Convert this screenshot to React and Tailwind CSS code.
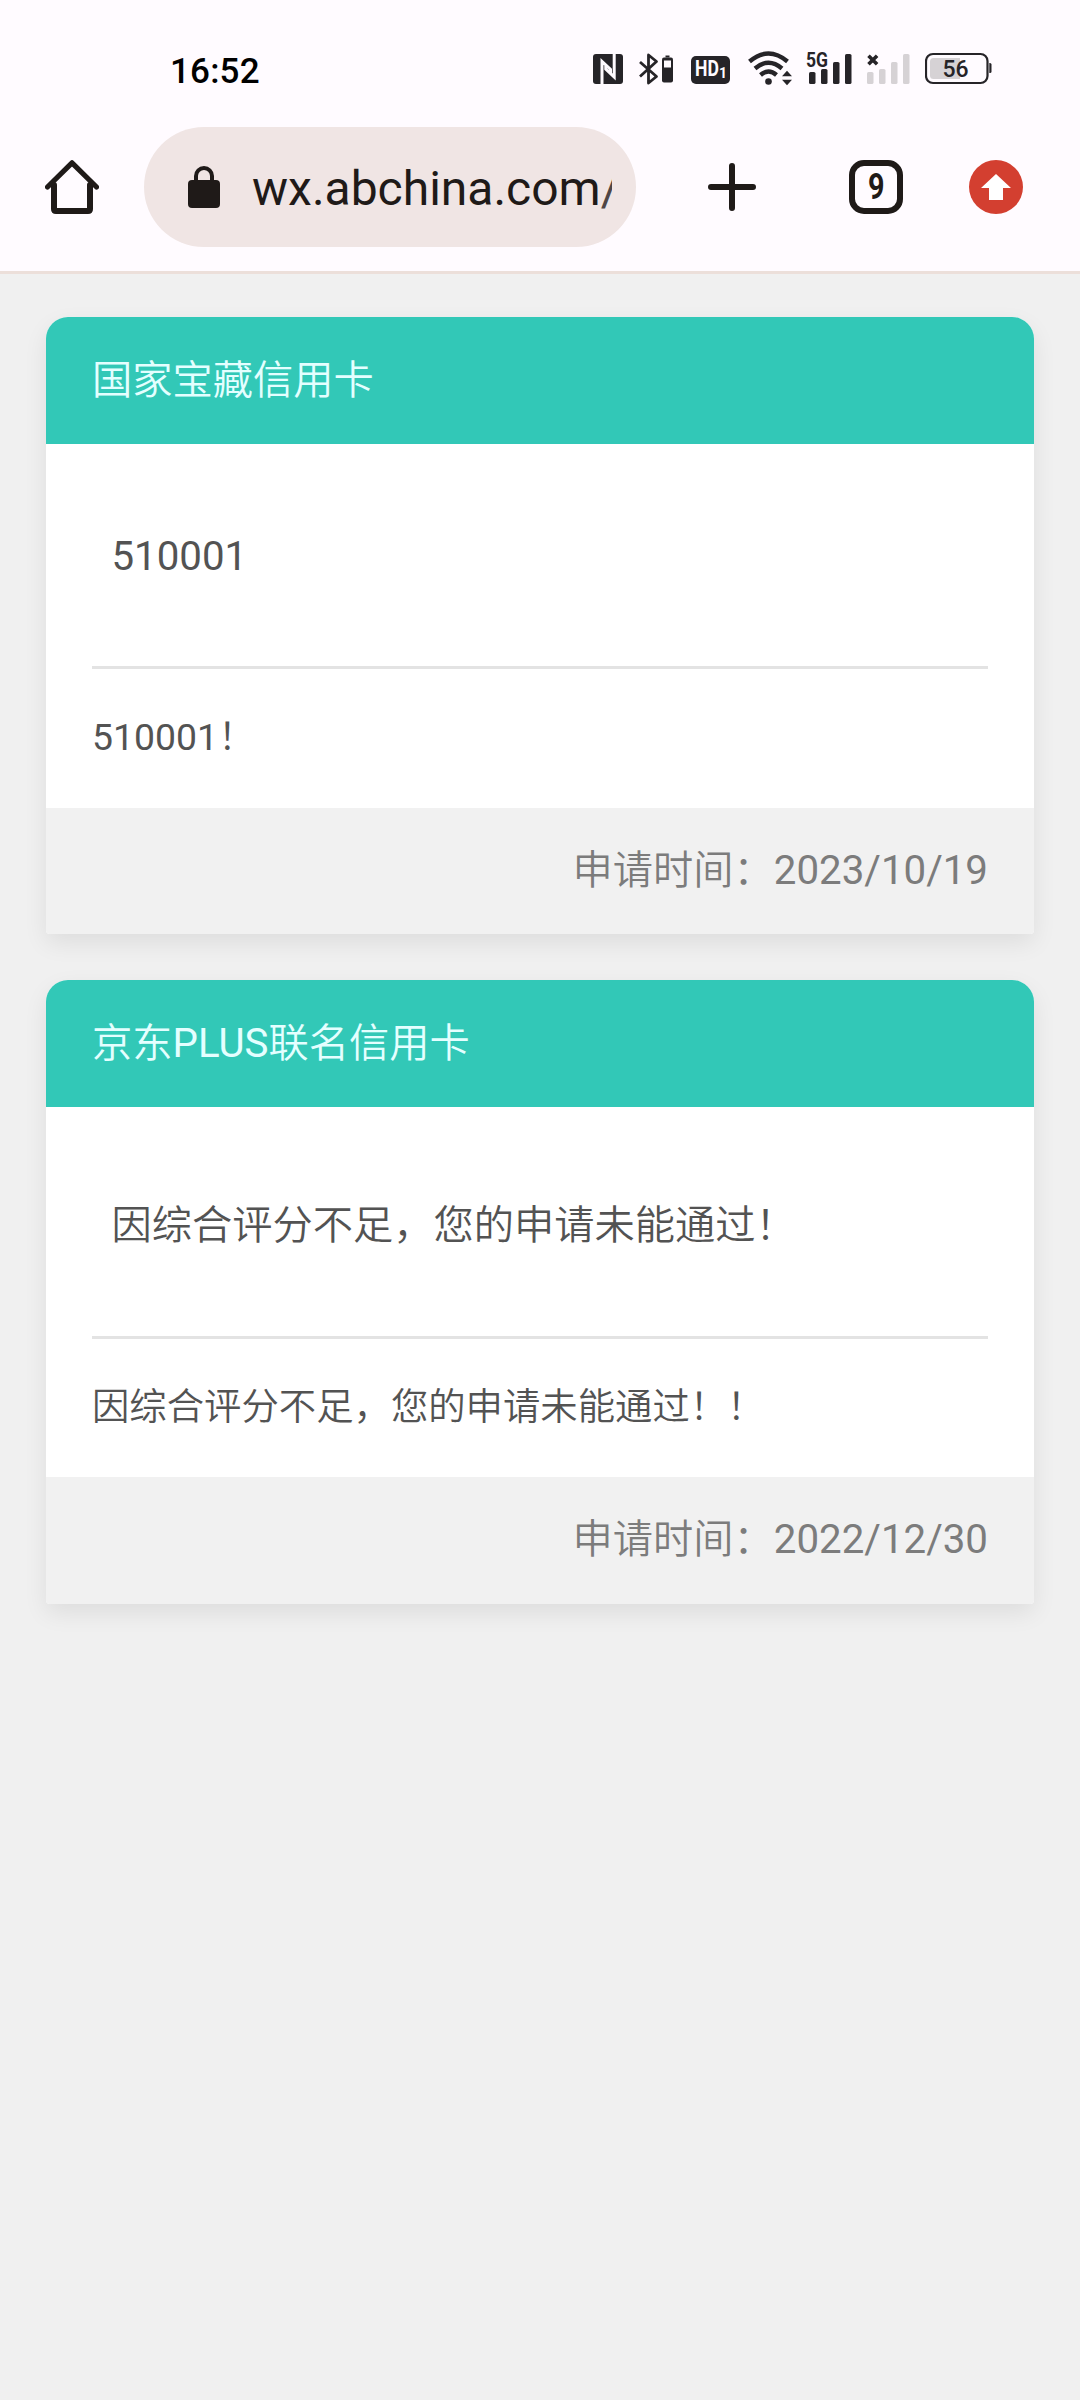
const cards = [
  {
    title: "国家宝藏信用卡",
    result: "510001",
    detail: "510001！",
    date: "2023/10/19",
    resultClass: "h-[222px] pt-1",
    detailClass: "h-[142px] pb-1",
    footerClass: "h-[126px]",
  },
  {
    title: "京东PLUS联名信用卡",
    result: "因综合评分不足，您的申请未能通过！",
    detail: "因综合评分不足，您的申请未能通过！！",
    date: "2022/12/30",
    resultClass: "h-[229px] pt-2",
    detailClass: "h-[141px] pb-0.5",
    footerClass: "h-[127px] pb-0.5",
  },
];

function SignalBars({ x, color }) {
  return (
    <g fill={color}>
      <rect x={x} y="72" width="6.5" height="12" rx="1.6" />
      <rect x={x + 12} y="69" width="6.5" height="15" rx="1.6" />
      <rect x={x + 24} y="62" width="6.5" height="22" rx="1.6" />
      <rect x={x + 36} y="54" width="6.5" height="30" rx="1.6" />
    </g>
  );
}

function StatusIcons() {
  return (
    <div className="flex h-10 items-center text-[#262428]">
      {/* NFC */}
      <svg className="h-10 w-[30px]" viewBox="593 48 30 40" fill="none">
        <rect x="593" y="54" width="30" height="30" rx="3" fill="currentColor" />
        <path d="M602 84V61.5L610.500 69.500V73" stroke="#fffbff" strokeWidth="3" />
        <path d="M614.200 54V77L605.800 69V66" stroke="#fffbff" strokeWidth="3" />
      </svg>
      {/* Bluetooth with device battery */}
      <svg className="ml-4 h-10 w-[34px]" viewBox="639 48 34 40" fill="none">
        <path d="M640 62l16.500 14.500L648.500 83V55l8 6.500L640 76.500" stroke="currentColor" strokeWidth="2.800" strokeLinejoin="round" />
        <path d="M665.500 55.500h4v2h-4z" fill="currentColor" />
        <rect x="662" y="57.500" width="11" height="25" rx="2" fill="currentColor" />
        <rect x="664" y="60.500" width="7" height="7" fill="#fffbff" />
      </svg>
      {/* HD voice */}
      <div className="mt-1 ml-[18px] flex h-7 w-[39px] items-center rounded-[5px] bg-current pl-1 font-['Roboto',sans-serif] leading-7 font-bold">
        <span className="w-6">
          <span className="inline-block origin-left scale-x-80 text-[22px] text-[#fffbff]">HD</span>
        </span>
        <span className="pt-[5px] text-[14px] text-[#fffbff]">1</span>
      </div>
      {/* Wi-Fi with traffic arrows */}
      <svg className="ml-[18px] h-10 w-[45px]" viewBox="748 48 45 40" fill="none">
        <g stroke="currentColor" strokeWidth="4.400">
          <path d="M749.500 61.500Q768.500 45.500 787.500 61.500" />
          <path d="M755 68.500Q768.500 57 782 68.500" />
          <path d="M760.500 75Q768.500 68 776.500 75" />
        </g>
        <circle cx="768.500" cy="81.500" r="3.300" fill="currentColor" />
        <path d="M782 76.200l5-5.500 5 5.500zM782 79.800h10l-5 5.500z" fill="currentColor" />
      </svg>
      {/* 5G signal */}
      <svg className="ml-[13px] h-10 w-[46px]" viewBox="806 48 46 40">
        <SignalBars x={809} color="currentColor" />
        <text x="806" y="67" textLength="22" lengthAdjust="spacingAndGlyphs" fill="currentColor" stroke="#fffbff" strokeWidth="2" paintOrder="stroke" className="font-['Roboto',sans-serif] text-[20px] font-bold">5G</text>
      </svg>
      {/* Second SIM without service */}
      <svg className="ml-[15px] h-10 w-[43px]" viewBox="867 48 43 40">
        <SignalBars x={867} color="#d6d2d5" />
        <path d="M868.500 55.700l8.600 8.600m0-8.600l-8.600 8.600" stroke="currentColor" strokeWidth="3.600" />
      </svg>
      {/* Battery */}
      <svg className="ml-[15px] h-10 w-[67px]" viewBox="925 48 67 40">
        <rect x="926" y="54" width="61.500" height="29" rx="7" fill="none" stroke="currentColor" strokeWidth="2.200" />
        <path d="M930 61.500q0-3.500 3.500-3.500H960v21h-26.500q-3.500 0-3.500-3.500z" fill="#d6d2d5" />
        <path d="M989.300 63h.7q1.500 0 1.500 1.500v7q0 1.500-1.500 1.500h-.7z" fill="currentColor" />
        <text x="942.500" y="76.500" fill="currentColor" className="font-['Roboto',sans-serif] text-[23px] font-medium">56</text>
      </svg>
    </div>
  );
}

function StatusBar() {
  return (
    <div className="flex h-[110px] items-start pt-12 pl-[170px]">
      <span className="w-[423px] pt-1 font-['Roboto',sans-serif] text-[35px] leading-10 font-medium tracking-[0.2px] text-black">16:52</span>
      <StatusIcons />
    </div>
  );
}

function Toolbar() {
  return (
    <div className="flex h-[161px] items-center pb-[7px] pl-[45px] text-[#1f1a18]">
      <svg className="size-[54px]" viewBox="45 160 54 54" fill="none" stroke="currentColor" strokeLinecap="round" strokeLinejoin="round">
        <path d="M54 185v24q0 2 2 2h32q2 0 2-2v-24" strokeWidth="6" />
        <path d="M47.500 187L72 162.800 96.500 187" strokeWidth="5.200" />
      </svg>
      <div className="ml-[45px] flex h-[120px] w-[492px] items-center rounded-full bg-[#f0e5e4] pl-11">
        <svg className="h-[42px] w-8" viewBox="188 165 32 42">
          <rect x="188" y="179" width="32" height="28" rx="4" fill="currentColor" />
          <path d="M196 181v-6a8 8 0 0 1 16 0v6" fill="none" stroke="currentColor" strokeWidth="4" />
        </svg>
        <div className="mt-[3px] ml-8 w-[360px] overflow-hidden whitespace-nowrap font-['Roboto',sans-serif] text-[48px] leading-[60px]">
          wx.abchina.com<span className="text-[#4f4645]">/</span>
        </div>
      </div>
      <svg className="ml-[72px] size-12" viewBox="0 0 48 48" stroke="currentColor" strokeWidth="6" strokeLinecap="round">
        <path d="M24 3v42M3 24h42" />
      </svg>
      <div className="ml-[93px] flex size-[54px] items-center justify-center rounded-[15px] border-6 border-current">
        <span className="scale-x-80 font-['Roboto',sans-serif] text-[36px] leading-none font-bold">9</span>
      </div>
      <svg className="ml-[66px] size-[54px]" viewBox="969 160 54 54">
        <circle cx="996" cy="187" r="27" fill="#d33f30" />
        <path d="M996 174l15 14h-8v12h-14v-12h-8z" fill="#fff" />
      </svg>
    </div>
  );
}

/* Latin runs keep the regular weight; Chinese runs use the demi-light cut. */
function MixedText({ children }) {
  return children.split(/([\x20-\x7e]+)/).filter(Boolean).map((run, i) => (
    <span key={i} className={/^[\x20-\x7e]/.test(run) ? "font-normal" : "font-[350]"}>
      {run}
    </span>
  ));
}

function ApplicationCard({ title, result, detail, date, resultClass, detailClass, footerClass }) {
  return (
    <section className="overflow-hidden rounded-t-[22px] rounded-b-[4px] bg-white text-[40.25px] shadow-[0_9px_23px_rgba(0,0,0,0.08)]">
      <h2 className="flex h-[127px] items-center bg-[#32c8b7] px-[46px] text-[#e4ffff]">
        <MixedText>{title}</MixedText>
      </h2>
      <div className="px-[46px] text-[#535353]">
        <p className={`flex items-center px-[19.5px] ${resultClass}`}>
          <MixedText>{result}</MixedText>
        </p>
        <p className={`flex items-center border-t-[3px] border-[#e3e3e3] text-[37.375px] ${detailClass}`}>
          <MixedText>{detail}</MixedText>
        </p>
      </div>
      <footer className={`flex items-center justify-end bg-[#f1f1f1] px-[46px] text-[#7c7c7c] ${footerClass}`}>
        <span className="font-[350]">申请时间：</span>
        <time>{date}</time>
      </footer>
    </section>
  );
}

export default function App() {
  return (
    <div className="min-h-[2400px] w-[1080px] bg-[#f0f0f0]">
      <header className="border-b-[3px] border-[#ecdfda] bg-[#fffbff]">
        <StatusBar />
        <Toolbar />
      </header>
      <main className="flex flex-col gap-[46px] px-[46px] pt-[43px] font-['Roboto','Noto_Sans_CJK_SC',sans-serif] font-normal leading-[60px]">
        {cards.map((card) => (
          <ApplicationCard key={card.date} {...card} />
        ))}
      </main>
    </div>
  );
}
